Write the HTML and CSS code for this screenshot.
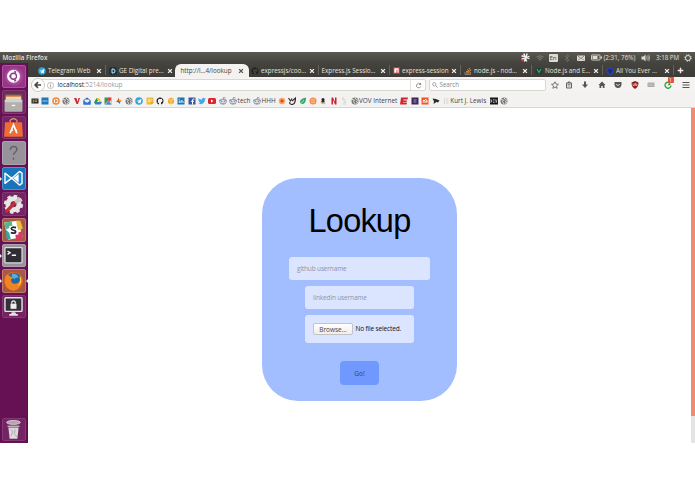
FILE: index.html
```html
<!DOCTYPE html>
<html lang="en">
<head>
<meta charset="utf-8">
<title>Lookup</title>
<link rel="stylesheet" href="styles.css">
</head>
<body>
<svg class="defs" width="0" height="0">
  <symbol id="globe" viewBox="0 0 16 16"><circle cx="8" cy="8" r="7" fill="#777"/><path d="M2 5l5 1-2 3 3 5M8 1l2 4 5 2M10 9l3 1-2 4" fill="none" stroke="#e8e8e8" stroke-width="1.8"/></symbol>
  <symbol id="alien" viewBox="0 0 16 16"><path d="M8 5l1-4 4 1" fill="none" stroke="#567" stroke-width="1.3"/><circle cx="2.5" cy="7" r="2" fill="#678aab"/><circle cx="13.5" cy="7" r="2" fill="#678aab"/><ellipse cx="8" cy="9.5" rx="6.5" ry="5" fill="#e4edf6" stroke="#58748f" stroke-width="1.3"/><circle cx="5.5" cy="8.5" r="1.4" fill="#e44b27"/><circle cx="10.5" cy="8.5" r="1.4" fill="#e44b27"/><path d="M5 12q3 1.5 6 0" fill="none" stroke="#555"/></symbol>
  <symbol id="plane" viewBox="0 0 16 16"><circle cx="8" cy="8" r="7.5" fill="#2ca5e0"/><path d="M3 8l10-4-2 9-3-2-2 2v-3l4-4-5 3z" fill="#fff"/></symbol>
  <symbol id="cat" viewBox="0 0 16 16"><path d="M8 1C4 1 1 4 1 8s2 6 5 7v-3c-2 0-3-1-3-2 1 0 2 1 3 1-3-1-3-5-1-6l0-2 2 1h3l2-1v2c2 2 1 5-2 6v4c3-1 5-4 5-7 0-4-3-7-7-7z" fill="#1d1d1d"/></symbol>
  <symbol id="close" viewBox="0 0 8 8"><path d="M1.5 1.500l5 5M6.500 1.500l-5 5" fill="none" stroke="currentColor" stroke-width="1.800"/></symbol>
</svg>
<div class="screen">
  <header class="topbar">
    <span class="app">Mozilla Firefox</span>
    <div class="tray">
      <svg class="t9" viewBox="0 0 16 16"><path d="M5 1l5 14M11 1L6 15M1 5l14 5M1 11l14-5" stroke="#f4eeee" stroke-width="2.6"/><circle cx="3" cy="13" r="2" fill="#e33"/></svg>
      <svg class="t8" viewBox="0 0 16 16"><path d="M1 6q7-5 14 0M3.500 9q4.500-3.500 9 0M6 12q2-2 4 0" fill="none" stroke="#898782" stroke-width="1.700"/></svg>
      <span class="lang">En</span>
      <svg class="t8" viewBox="0 0 16 16"><path d="M4 4l8 8-4 3V1l4 3-8 8" fill="none" stroke="#77756f" stroke-width="1.400"/></svg>
      <svg class="t8" viewBox="0 0 16 16"><rect x="0" y="3" width="16" height="11" rx="1" fill="#dfdbd2"/><path d="M2 4l6 5 6-5M2 13l4-4M14 13l-4-4" fill="none" stroke="#45433e" stroke-width="1.200"/></svg>
      <svg class="batt" viewBox="0 0 22 12"><rect x="1" y="1" width="17" height="10" rx="1" fill="none" stroke="#dfdbd2" stroke-width="1.800"/><path d="M3 3h10v6H3zM19 4h3v4h-3z" fill="#dfdbd2"/></svg>
      <span class="pct">(2:31, 76%)</span>
      <svg class="snd" viewBox="0 0 18 16"><path d="M1 5h4l4-4v14l-4-4H1z" fill="#dfdbd2"/><path d="M11 5q2 3 0 6M13 3q4 5 0 10M15.500 1.500q4 6.500 0 13" fill="none" stroke="#dfdbd2" stroke-width="1.300"/></svg>
      <span class="clock">3:18 PM</span>
      <svg class="t8" viewBox="0 0 16 16"><circle cx="8" cy="8" r="5" fill="none" stroke="#dfdbd2" stroke-width="2"/><circle cx="8" cy="8" r="6.500" fill="none" stroke="#dfdbd2" stroke-width="2" stroke-dasharray="2.600 2.500"/></svg>
    </div>
  </header>
  <div class="desktop">
    <nav class="launcher">
      <div class="tile purple"><svg viewBox="0 0 24 24"><circle cx="12" cy="12" r="7.500" fill="#fff"/><circle cx="12" cy="12" r="3.500" fill="none" stroke="#8a3a7c" stroke-width="1.500"/><path d="M7 12h1.600M13.500 7.800l1-1.600M13.500 16.200l1 1.600" stroke="#8a3a7c" stroke-width="2.400"/></svg></div>
      <div class="tile"><svg viewBox="0 0 24 24"><path d="M2 2h20l1 9H1z" fill="#6b5146"/><path d="M3 5h18v5H3z" fill="#ead6b8"/><path d="M3 4h17v1.500H3z" fill="#e5813b"/><rect x="1.500" y="9" width="21" height="14" rx="1" fill="#b2b0ad"/><path d="M2 9h20v3H2z" fill="#d4d2d0"/><path d="M10 15h4v1.500h-4z" fill="#fff"/></svg></div>
      <div class="tile"><svg viewBox="0 0 24 24"><path d="M8 7V4q4-4 8 0v3" fill="none" stroke="#eb9b75" stroke-width="1.300"/><path d="M2 6h20l1 17H1z" fill="#ef6d35"/><path d="M8 19l4-10 4 10" fill="none" stroke="#fff" stroke-width="2"/><path d="M9 15.500h2.500M14 15.500h2" fill="none" stroke="#fff" stroke-width="1.800"/></svg></div>
      <div class="tile gray"><svg viewBox="0 0 24 24"><path d="M8 8q1-4 4-4 4 0 4 3.500c0 3-4 3-4 6.500M12 17v2.500" fill="none" stroke="#656169" stroke-width="1.700"/></svg></div>
      <div class="tile blue run"><svg viewBox="0 0 24 24"><path d="M2 6v12l9-7 8-7 3 2v12l-3 2-8-7z" fill="#2586cf" stroke="#fff" stroke-width="1.600" stroke-linejoin="round"/><path d="M18 7v10l-6-5z" fill="#fff"/></svg></div>
      <div class="tile"><svg viewBox="0 0 24 24"><circle cx="12" cy="12" r="6.500" fill="none" stroke="#e9e6e5" stroke-width="6"/><circle cx="12" cy="12" r="9.500" fill="none" stroke="#e9e6e5" stroke-width="3.500" stroke-dasharray="4 3.450"/><path d="M4 20L14 10" stroke="#bd3035" stroke-width="4" stroke-linecap="round"/><path d="M14 10l5-6M15 10l6-3" stroke="#c8c4c5" stroke-width="2.500"/></svg></div>
      <div class="tile brown run"><svg viewBox="0 0 24 24"><path d="M1 3l16-2 6 19-17 3z" fill="#fff"/><path d="M1 3l9-1 1 6-8 3z" fill="#57b58c"/><path d="M15 1h5l3 9-6 2z" fill="#ecbd43"/><path d="M3 11l4 4 2 8-5-1z" fill="#34a7a5"/><path d="M14 16l8-3 1 8-8 2z" fill="#de3868"/><path d="M7 7l9-1 2 11-10 1z" fill="#fff"/><path d="M15 9q-5-1.500-5.500 1c0 2.500 5.500 1.500 5 4-.5 2.500-5 1-5.500.5" fill="none" stroke="#25232b" stroke-width="2"/></svg></div>
      <div class="tile gray run"><svg viewBox="0 0 24 24"><rect x="2" y="3" width="20" height="18" rx="1" fill="#302c33" stroke="#dedcde" stroke-width="1.500"/><path d="M5 7l3 2-3 2M10 12h5" fill="none" stroke="#fff" stroke-width="1.500"/></svg></div>
      <div class="tile brown run active"><svg viewBox="0 0 24 24"><circle cx="12" cy="12" r="11" fill="#e5651d"/><circle cx="12.500" cy="10.500" r="8.500" fill="#2566a5"/><path d="M10 3q7 0 8 5-4-1-5 2l-3-4z" fill="#4fb3dc"/><path d="M3 5q3-1 5 1l4 2-3 2q0 5 5 5 4 0 6-5 1 11-8 13C4 22 0 15 3 5z" fill="#ef8421"/><path d="M20 6q4 8-3 12 4-5 2-11z" fill="#f7cf46"/></svg></div>
      <div class="tile"><svg viewBox="0 0 24 24"><rect x="2" y="2" width="20" height="16" rx="1" fill="#343239" stroke="#e4e2e4" stroke-width="1.700"/><path d="M10 19h4l1 2h2v2H7v-2h2z" fill="#e4e2e4"/><path d="M8.500 9h7v6h-7z" fill="#eee"/><path d="M10 9V7q2-2.500 4 0v2" fill="none" stroke="#eee" stroke-width="1.400"/></svg></div>
      <div class="tile trash"><svg viewBox="0 0 24 24"><path d="M6 10h12l-1.500 13h-9z" fill="#dcd9da"/><path d="M9 12l2 3-2 5M14 12l-1 5 3 4" fill="none" stroke="#aaa2a8"/><ellipse cx="12" cy="4" rx="8" ry="2.300" fill="#b5a3b2" stroke="#ddd5dc"/><path d="M5 8.500h14" stroke="#c9bec8" stroke-width="1.500"/></svg></div>
    </nav>
    <main class="browser">
      <div class="tabs">
        <div class="tab"><svg class="fav"><use href="#plane"/></svg><span>Telegram Web</span><svg class="x"><use href="#close"/></svg></div>
        <div class="tab"><svg class="fav" viewBox="0 0 16 16"><rect width="16" height="16" rx="5" fill="#193443"/><path d="M6 4h2q4 0 4 4t-4 4H6z" fill="none" stroke="#cce9f5" stroke-width="2"/></svg><span>GE Digital pre…</span><svg class="x"><use href="#close"/></svg></div>
        <div class="tab current"><span>http://l…4/lookup</span><svg class="x"><use href="#close"/></svg></div>
        <div class="tab"><svg class="fav"><use href="#cat"/></svg><span>expressjs/coo…</span><svg class="x"><use href="#close"/></svg></div>
        <div class="tab"><span>Express.js Sessio…</span><svg class="x"><use href="#close"/></svg></div>
        <div class="tab"><svg class="fav npm" viewBox="0 0 16 16"><path d="M0 0h16v16H0z" fill="#d6292c"/><path d="M3 3h10v10h-3V6H8v7H3z" fill="#fff"/></svg><span>express-session</span><svg class="x"><use href="#close"/></svg></div>
        <div class="tab"><svg class="fav" viewBox="0 0 16 16"><path d="M2 10v5h11v-5" fill="none" stroke="#9a928b" stroke-width="1.500"/><path d="M4 12h7M4 9l7 1M6 5l6 4M10 2l4 6" stroke="#ea8632" stroke-width="2"/></svg><span>node.js - nod…</span><svg class="x"><use href="#close"/></svg></div>
        <div class="tab"><svg class="fav" viewBox="0 0 16 16"><path d="M1 2h14v12H1z" fill="#243b38"/><path d="M4 4l4 7 4-7" fill="none" stroke="#28b983" stroke-width="2.200"/></svg><span>Node.js and E…</span><svg class="x"><use href="#close"/></svg></div>
        <div class="tab"><svg class="fav" viewBox="0 0 16 16"><circle cx="8" cy="8" r="6" fill="#252e60" stroke="#2542b9" stroke-width="2.500"/><path d="M4 14l1-5" stroke="#2542b9" stroke-width="2"/></svg><span>All You Ever …</span><svg class="x"><use href="#close"/></svg></div>
        <svg class="plus" viewBox="0 0 10 10"><path d="M5 1v8M1 5h8" stroke="#f1efeb" stroke-width="2"/></svg>
      </div>
      <div class="navbar">
        <div class="address">
          <svg class="back" viewBox="0 0 16 16"><circle cx="8" cy="8" r="7.500" fill="#fcfcfb" stroke="#c8c5c2"/><path d="M11.500 8H5M8 4.700L4.700 8 8 11.300" fill="none" stroke="#464646" stroke-width="1.900"/></svg>
          <svg class="info" viewBox="0 0 16 16"><circle cx="8" cy="8" r="7" fill="none" stroke="#999" stroke-width="1.400"/><path d="M8 7v5M8 3.500v2" stroke="#888" stroke-width="1.800"/></svg>
          <span class="url"><b>localhost</b>:5214/lookup</span>
          <div class="reload"><svg viewBox="0 0 16 16"><path d="M12 5a5 5 0 1 0 1 5" fill="none" stroke="#888" stroke-width="2"/><path d="M14 1v6H8z" fill="#888"/></svg></div>
        </div>
        <div class="search"><svg viewBox="0 0 16 16"><circle cx="6" cy="6" r="4.500" fill="none" stroke="#888" stroke-width="1.800"/><path d="M9.500 9.500L15 15" stroke="#888" stroke-width="2.200"/></svg><span>Search</span></div>
        <div class="tools">
          <svg viewBox="0 0 16 16"><path d="M8 1.500l2 4.500 5 .5-4 3.300 1.200 5L8 12l-4.200 2.800 1.200-5L1 6.500 6 6z" fill="none" stroke="#555" stroke-width="1.500"/></svg>
          <svg viewBox="0 0 16 16"><path d="M3 4h10v10H3zM6 4V2h4v2" fill="none" stroke="#555" stroke-width="1.800"/><path d="M5 7h6M5 10h6" stroke="#555" stroke-width="1.300"/></svg>
          <svg viewBox="0 0 16 16"><path d="M6 1h4v6h4l-6 7-6-7h4z" fill="#555"/></svg>
          <svg viewBox="0 0 16 16"><path d="M8 1l7 7h-2v6H9.500v-4h-3v4H3V8H1z" fill="#555"/></svg>
          <svg viewBox="0 0 16 16"><path d="M1 3q0-1 1-1h12q1 0 1 1v4q-1 7-7 7T1 7z" fill="#555"/><path d="M4.500 6L8 9.500 11.500 6" fill="none" stroke="#fff" stroke-width="1.700"/></svg>
          <svg viewBox="0 0 16 16"><path d="M8 0l7 3q0 9-7 13Q1 12 1 3z" fill="#941d20"/><path d="M4 5v4h3V5M9 4v5h3V6H9" fill="none" stroke="#f2dddd" stroke-width="1.200"/></svg>
          <svg viewBox="0 0 16 16"><rect x="1" y="3" width="14" height="9" rx="1" fill="#aaa"/><path d="M3 6h10M3 9h10" stroke="#e8e8e8" stroke-dasharray="2 1"/></svg>
          <div class="ext"><svg viewBox="0 0 16 16"><path d="M12 4a6 6 0 1 0 2 5" fill="none" stroke="#28a43b" stroke-width="2.700"/><path d="M7 9l6-1-1-6z" fill="#28a43b"/></svg><span class="badge">1</span></div>
          <svg class="menu" viewBox="0 0 16 16"><path d="M1 3h14M1 8h14M1 13h14" stroke="#555" stroke-width="2"/></svg>
        </div>
      </div>
      <div class="bookmarks">
        <svg viewBox="0 0 16 16"><path d="M1 3h14v10H1z" fill="#292723"/><path d="M3 6h3v4H3M8 6h5M8 9h4" fill="none" stroke="#cbbd92" stroke-width="1.500"/></svg>
        <svg viewBox="0 0 16 16"><path d="M1 1h14v14H1z" fill="#2176bc"/><path d="M3 8h10" stroke="#a4d1ef" stroke-width="2"/></svg>
        <svg viewBox="0 0 16 16"><circle cx="8" cy="8" r="6" fill="#fff" stroke="#f0863b" stroke-width="3"/><path d="M6 4l6 4-6 4z" fill="#f0863b"/></svg>
        <svg><use href="#globe"/></svg>
        <svg viewBox="0 0 16 16"><path d="M2 2h5l2 8 2-8h3L10 14H7z" fill="#c72635"/></svg>
        <svg viewBox="0 0 16 16"><path d="M1 6l7-5 7 5v9H1z" fill="#2861bd"/><path d="M3 5h10v4l-5 3-5-3z" fill="#e7eefb"/><path d="M1 7l7 5 7-5v8H1z" fill="#3274d7"/></svg>
        <svg viewBox="0 0 16 16"><path d="M5 2h5l6 9h-5z" fill="#f5c52f"/><path d="M5 2l3 5-5 8-3-4z" fill="#1b9c5b"/><path d="M5 10h11l-3 5H3z" fill="#367bd8"/></svg>
        <svg viewBox="0 0 16 16"><path d="M1 1h14v14H1z" fill="#38995c"/><path d="M1 15L15 1v14z" fill="#d9dfdb"/><path d="M3 15l6-7 6 7z" fill="#4c82d9"/><path d="M8 6q-2-5 3-5t3 5l-3 4z" fill="#db4638"/></svg>
        <svg viewBox="0 0 16 16"><path d="M8 1v7H4z" fill="#e74737"/><path d="M15 8H8V4z" fill="#f2bb28"/><path d="M8 15V8h4z" fill="#34a052"/><path d="M1 8h7v4z" fill="#4076df"/></svg>
        <svg><use href="#globe"/></svg>
        <svg><use href="#plane"/></svg>
        <svg viewBox="0 0 16 16"><path d="M1 1h14v10l-4 4H1z" fill="#f5bd37"/><path d="M4 6h7M4 9h4" stroke="#fff" stroke-width="1.500"/><path d="M11 15v-4h4z" fill="#cf8415"/></svg>
        <svg><use href="#cat"/></svg>
        <svg viewBox="0 0 16 16"><path d="M2 4l6-3 6 3v8l-6 3-6-3z" fill="#efac35"/><path d="M2 4l6 3 6-3M8 7v8" fill="none" stroke="#ffe1a1" stroke-width="1.500"/></svg>
        <svg viewBox="0 0 16 16"><path d="M1 1h14v14H1z" fill="#1675b2"/><path d="M4.500 7v5M4.500 3.500v2M8 12V7M8 9q3-4 4 0v3" fill="none" stroke="#fff" stroke-width="1.800"/></svg>
        <svg viewBox="0 0 16 16"><path d="M1 1h14v14H1z" fill="#3b579d"/><path d="M13 4h-2q-2 0-2 2v9M6 8.500h6" fill="none" stroke="#fff" stroke-width="2"/></svg>
        <svg viewBox="0 0 16 16"><path d="M1 2q3 4 7 3c0-4 4-4 5-2l3-1-2 3c0 7-7 12-14 8 3 0 4-1 5-2-2 0-3-1-3-3H1z" fill="#45a8e6"/></svg>
        <svg viewBox="0 0 16 16"><rect y="2" width="16" height="12" rx="3" fill="#d8292a"/><path d="M6 5l5 3-5 3z" fill="#fff"/></svg>
        <svg><use href="#alien"/></svg>
        <span class="mark tech"><svg><use href="#alien"/></svg>tech</span>
        <span class="mark hhh"><svg><use href="#alien"/></svg>HHH</span>
        <svg viewBox="0 0 16 16"><circle cx="8" cy="8" r="5" fill="#e9641b" stroke="#f6a670" stroke-width="3"/><circle cx="8" cy="8" r="2" fill="#c34d10"/></svg>
        <svg viewBox="0 0 16 16"><path d="M1 2l4 6 3-5M8 8l7-6q0 12-7 13-5 0-5-5" fill="none" stroke="#34252a" stroke-width="2.200"/></svg>
        <svg viewBox="0 0 16 16"><path d="M14 1Q2 3 2 10q0 5 6 4 6-2 6-13z" fill="#31a765"/><path d="M2 15l8-9" stroke="#dbf4e5" stroke-width="1.500"/></svg>
        <svg viewBox="0 0 16 16"><circle cx="8" cy="8" r="7" fill="#f08c46"/><path d="M4 5h8M4 8h8M4 11h8" stroke="#f8c5a0" stroke-width="1.500"/></svg>
        <svg viewBox="0 0 16 16"><circle cx="8" cy="5" r="3" fill="#222"/><path d="M5 7h6v4H5z" fill="#222"/><path d="M3 11q6 5 10 1" fill="none" stroke="#f0a62a" stroke-width="2"/></svg>
        <svg viewBox="0 0 16 16"><path d="M3 1h3l4 9V1h3v14h-3L6 6v9H3z" fill="#ce202d"/></svg>
        <svg viewBox="0 0 16 16"><path d="M4 2h4M4 5h6M7 8h5M7 11h5M5 14h7" stroke="#ccc" stroke-width="1.500"/></svg>
        <span class="mark vov"><svg><use href="#globe"/></svg>VOV Internet</span>
        <svg viewBox="0 0 16 16"><path d="M2 1h14l-1 4H7v2h7l-1 4H6v1h8l-1 3H0z" fill="#d62530"/></svg>
        <svg viewBox="0 0 16 16"><path d="M1 1h14v14H1z" fill="#3d2858"/><path d="M5 4h6v8H5z" fill="#755b8f"/></svg>
        <svg viewBox="0 0 16 16"><path d="M1 1h14v14H1z" fill="#f05526"/><path d="M3 10h10M4 7h4M8 5q5 0 4 5" fill="none" stroke="#fff" stroke-width="2"/></svg>
        <svg viewBox="0 0 16 16"><path d="M1 3l7 1 7 3-3 4-3-1-6 4 1-5z" fill="#2c2c2c"/></svg>
        <span class="mark kurt"><svg viewBox="0 0 16 16"><path d="M5 2v12M8 4h5M8 8h5M8 12h5" stroke="#ccc" stroke-width="1.500"/></svg>Kurt J. Lewis</span>
        <svg viewBox="0 0 16 16"><path d="M0 1h16v14H0z" fill="#171717"/><path d="M2 5v6l2-3zM6 5h3M6 8h3M6 11h3M11 5l1.500 6L14 5" fill="none" stroke="#eee" stroke-width="1.200"/></svg>
        <svg><use href="#globe"/></svg>
      </div>
      <div class="viewport">
        <section class="page">
          <form class="card">
            <h1>Lookup</h1>
            <input class="field wide" type="text" placeholder="github username">
            <input class="field" type="text" placeholder="linkedin username">
            <div class="field file"><button type="button" class="browse">Browse…</button><span>No file selected.</span></div>
            <button type="button" class="go">Go!</button>
          </form>
        </section>
        <div class="scrollbar"><div class="thumb"></div></div>
      </div>
    </main>
  </div>
</div>
</body>
</html>
```
FILE: styles.css
```css
* { box-sizing: border-box; }
body { margin: 0; background: #fff; width: 695px; height: 494px; overflow: hidden; font: 6.3px/8px "Open Sans", "Noto Sans", sans-serif; color: #444; }
svg { display: block; flex: none; }
.defs { position: absolute; }
.screen { margin-top: 52px; width: 695px; height: 391px; overflow: hidden; }
.topbar { height: 11px; display: flex; align-items: center; justify-content: space-between; padding: 0 3px 0 2.5px; background: linear-gradient(#5a5851, #45433e); color: #e6e2da; white-space: nowrap; }
.app { font-weight: 600; font-size: 6.3px; letter-spacing: .05px; }
.tray { display: flex; align-items: center; }
.tray > * { flex: none; }
.t8 { width: 8px; height: 8px; }
.t9 { width: 9px; height: 9px; margin-right: 6px; }
.lang { width: 9px; height: 8px; margin: 0 5px; background: #dfdbd2; color: #444; font-size: 6px; text-align: center; border-radius: 1px; }
.t8 + .t8 { margin-left: 6.5px; }
.batt { width: 11px; height: 7px; margin: 0 2px 0 5.5px; }
.pct { width: 32px; margin-right: 5px; }
.snd { width: 9px; height: 8px; margin-right: 6.5px; }
.clock { width: 23px; margin-right: 5px; font-size: 6.2px; }
.desktop { display: flex; height: 380px; }
.launcher { width: 28px; background: #651153; display: flex; flex-direction: column; align-items: center; gap: 2.1px; padding: 1.5px 0 2px; border-right: 1px solid #5a0d49; }
.tile { position: relative; width: 24px; height: 23.5px; padding: .5px; border-radius: 2px; border: 1px solid #813a72; background: #742363; flex: none; }
.tile svg { width: 100%; height: 100%; }
.purple { background: radial-gradient(#d08cc1, #9a348b 65%); border-color: #a6579b; }
.gray { background: #98939a; border-color: #aaa3ab; }
.blue { background: #1974bc; border-color: #4796d0; }
.brown { background: #a65a45; border-color: #c07b67; }
.run::before { content: ""; position: absolute; left: -3px; top: 9px; border: 2px solid transparent; border-left-color: #eee; border-right: 0; }
.active::after { content: ""; position: absolute; right: -3px; top: 9px; border: 2px solid transparent; border-right-color: #eee; border-left: 0; }
.trash { margin-top: auto; }
.browser { flex: 1; min-width: 0; display: flex; flex-direction: column; }
.tabs { height: 14px; flex: none; display: flex; align-items: center; padding-left: 6.5px; background: linear-gradient(#45433e, #3c3b37); color: #e6e2da; }
.tab { width: 71px; height: 14px; flex: none; display: flex; align-items: center; padding: 1px 3px 0; white-space: nowrap; border-style: solid; border-width: 0 1px 0 0; border-image: linear-gradient(transparent 22%, #65625b 22%, #65625b 78%, transparent 78%) 1; }
.fav { width: 8px; height: 8px; margin-right: 2.5px; }
.npm { width: 7px; height: 7px; }
.x { width: 6px; height: 6px; margin-left: auto; color: #f1efeb; }
.current { height: 13px; margin: 1px -1px 0 -2px; width: 74px; padding: 0 5px 0 6px; background: #f3f2f1; color: #444; border: 0; border-radius: 6px 6px 0 0; }
.current .x { color: #555; }
.plus { width: 7px; height: 7px; margin-left: 3px; }
.navbar { height: 16px; flex: none; display: flex; align-items: center; background: #f4f3f2; padding-left: 3px; }
.address { width: 394.5px; height: 11.5px; display: flex; align-items: center; background: #fff; border: 1px solid #d9d7d4; border-radius: 6px 2px 2px 6px; }
.back { width: 14px; height: 14px; margin-left: -1px; }
.info { width: 7px; height: 7px; margin-left: 1.5px; }
.url { margin-left: 4px; color: #999; font-size: 6.3px; }
.url b { color: #222; font-weight: 400; }
.reload { height: 100%; margin-left: auto; padding: 0 3px 0 3.5px; display: flex; align-items: center; border-left: 1px solid #e2e0de; }
.reload svg { width: 7px; height: 7px; }
.search { margin-left: 3px; width: 117px; height: 11.5px; display: flex; align-items: center; gap: 2px; padding-left: 2px; background: #fff; border: 1px solid #d9d7d4; border-radius: 2px; color: #888; font-size: 6.2px; }
.search svg { width: 6px; height: 6px; }
.tools { margin-left: 5px; display: flex; align-items: center; gap: 8.5px; }
.tools svg { width: 8px; height: 8px; }
.tools > svg:first-child { margin-right: -2.5px; }
.ext { position: relative; }
.badge { position: absolute; left: 4px; top: -4px; width: 6px; height: 6px; background: #e74d43; border-radius: 1px; color: #fff; font-size: 5px; line-height: 6px; text-align: center; }
.tools .menu { margin-left: 2px; }
.bookmarks { height: 15px; flex: none; display: flex; align-items: center; gap: 2.45px; padding: 1px 0 0 3px; background: #f3f2f1; border-bottom: 1px solid #d8d6d4; white-space: nowrap; font-size: 6.4px; }
.bookmarks svg { width: 8px; height: 8px; }
.mark { display: flex; align-items: center; gap: .3px; flex: none; overflow: visible; }
.tech { width: 21.5px; }
.hhh { width: 22px; }
.vov { width: 47px; }
.kurt { width: 45.5px; }
.viewport { flex: 1; min-height: 0; display: flex; background: #fff; }
.page { flex: 1; padding: 70px 0 0 234px; }
.scrollbar { width: 4.5px; background: #e4e4e4; }
.thumb { height: 308px; background: #ef8d6c; }
.card { width: 195px; height: 222.5px; border-radius: 36px; background: #a3beff; display: flex; flex-direction: column; align-items: center; padding-top: 25px; }
h1 { margin: 0 0 18px; height: 36px; font: 400 32.5px/36px "Liberation Sans", sans-serif; letter-spacing: -.8px; color: #000; }
.field { width: 109px; height: 23px; margin: 0 0 6px; padding: 0 8px; border: 0; border-radius: 3px; background: #dce5ff; font: 6.5px/8px "Open Sans", "Noto Sans", sans-serif; letter-spacing: -.15px; flex: none; }
.field::placeholder { color: #8d94a8; opacity: 1; }
.wide { width: 141px; }
.file { height: 28px; margin-bottom: 18px; display: flex; align-items: center; color: #111; white-space: nowrap; }
.browse { width: 40px; height: 12px; margin-right: 2.5px; padding: 0; border: 1px solid #c4c4c4; border-radius: 2px; background: linear-gradient(#fff, #eee); color: #444; font: inherit; line-height: 9px; flex: none; }
.go { width: 39px; height: 24px; flex: none; border: 0; border-radius: 4px; background: #6f99ff; color: #3b4251; font: 6.5px "Open Sans", sans-serif; padding: 0; }
```
